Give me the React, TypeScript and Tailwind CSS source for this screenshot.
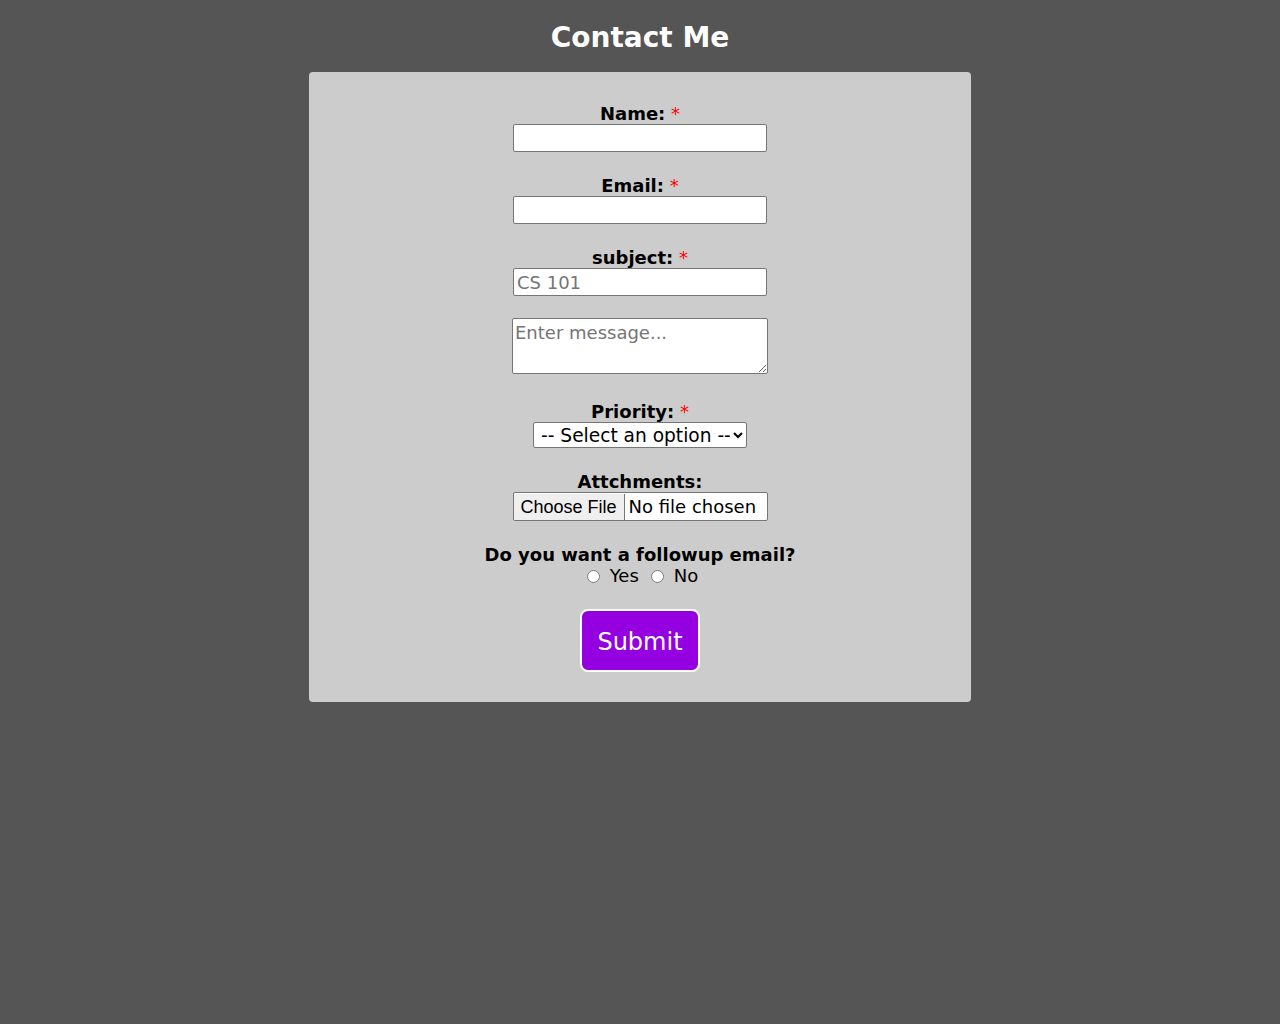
import { useState } from "react";

const Req = () => <span className="text-[#ff0000] font-normal"> *</span>;

const Label = ({ children, req }: { children: React.ReactNode; req?: boolean }) => (
  <label className="block text-[18px] leading-[21px] font-bold text-black">
    {children}
    {req && <Req />}
  </label>
);

const inputCls =
  "block w-[254px] h-[28px] bg-white border border-[#767676] rounded-[2px] px-[3px] text-[18px] text-black placeholder:text-[#757575] outline-none";

export default function App() {
  const [followup, setFollowup] = useState("");
  const [priority, setPriority] = useState("");

  return (
    <div className="min-h-[1024px] bg-[#555555] font-['DejaVu_Sans',Verdana,sans-serif] pt-[18px]">
      <h1 className="text-center text-white text-[28px] leading-[40px] font-bold">Contact Me</h1>
      <form
        className="mx-auto mt-[14px] w-[662px] bg-[#cccccc] rounded-[4px] pt-[31px] pb-[30px] flex flex-col items-center"
        onSubmit={(e) => e.preventDefault()}
      >
        <div className="flex flex-col items-center">
          <Label req>Name:</Label>
          <input className={inputCls} type="text" />
        </div>
        <div className="flex flex-col items-center mt-[23px]">
          <Label req>Email:</Label>
          <input className={inputCls} type="email" />
        </div>
        <div className="flex flex-col items-center mt-[23px]">
          <Label req>subject:</Label>
          <input className={inputCls} type="text" placeholder="CS 101" />
        </div>
        <textarea
          className="block mt-[22px] w-[256px] h-[56px] bg-white border border-[#767676] rounded-[2px] px-[2px] pt-[3px] text-[18px] leading-[21px] text-black placeholder:text-[#757575] outline-none"
          placeholder="Enter message..."
        />
        <div className="flex flex-col items-center mt-[27px]">
          <Label req>Priority:</Label>
          <select
            className="block w-[214px] h-[26px] bg-white border border-[#767676] rounded-[2px] pl-[3px] text-[18.6px] text-black appearance-auto outline-none"
            value={priority}
            onChange={(e) => setPriority(e.target.value)}
          >
            <option value="">-- Select an option --</option>
            <option value="low">Low</option>
            <option value="medium">Medium</option>
            <option value="high">High</option>
          </select>
        </div>
        <div className="flex flex-col items-center mt-[23px]">
          <Label>Attchments:</Label>
          <input
            type="file"
            className="block w-[255px] h-[29px] bg-white border border-[#767676] rounded-[2px] text-[18px] text-black file:h-full file:mr-[4px] file:px-[7px] file:bg-[#efefef] file:border-0 file:border-r file:border-[#767676] file:text-[18px] file:font-['Liberation_Sans',Arial,sans-serif] file:text-black"
          />
        </div>
        <div className="flex flex-col items-center mt-[23px]">
          <Label>Do you want a followup email?</Label>
          <div className="flex items-center text-[18px] leading-[22px] text-black">
            <input
              type="radio"
              name="followup"
              className="w-[13px] h-[13px] ml-[5px] mr-[10px] accent-[#767676]"
              checked={followup === "yes"}
              onChange={() => setFollowup("yes")}
            />
            <span>Yes</span>
            <input
              type="radio"
              name="followup"
              className="w-[13px] h-[13px] ml-[12px] mr-[10px] accent-[#767676]"
              checked={followup === "no"}
              onChange={() => setFollowup("no")}
            />
            <span>No</span>
          </div>
        </div>
        <button
          type="submit"
          className="mt-[22px] w-[120px] h-[63px] bg-[#9400e0] text-white text-[24px] leading-[30px] pt-[2px] border-2 border-white rounded-[8px]"
        >
          Submit
        </button>
      </form>
    </div>
  );
}
